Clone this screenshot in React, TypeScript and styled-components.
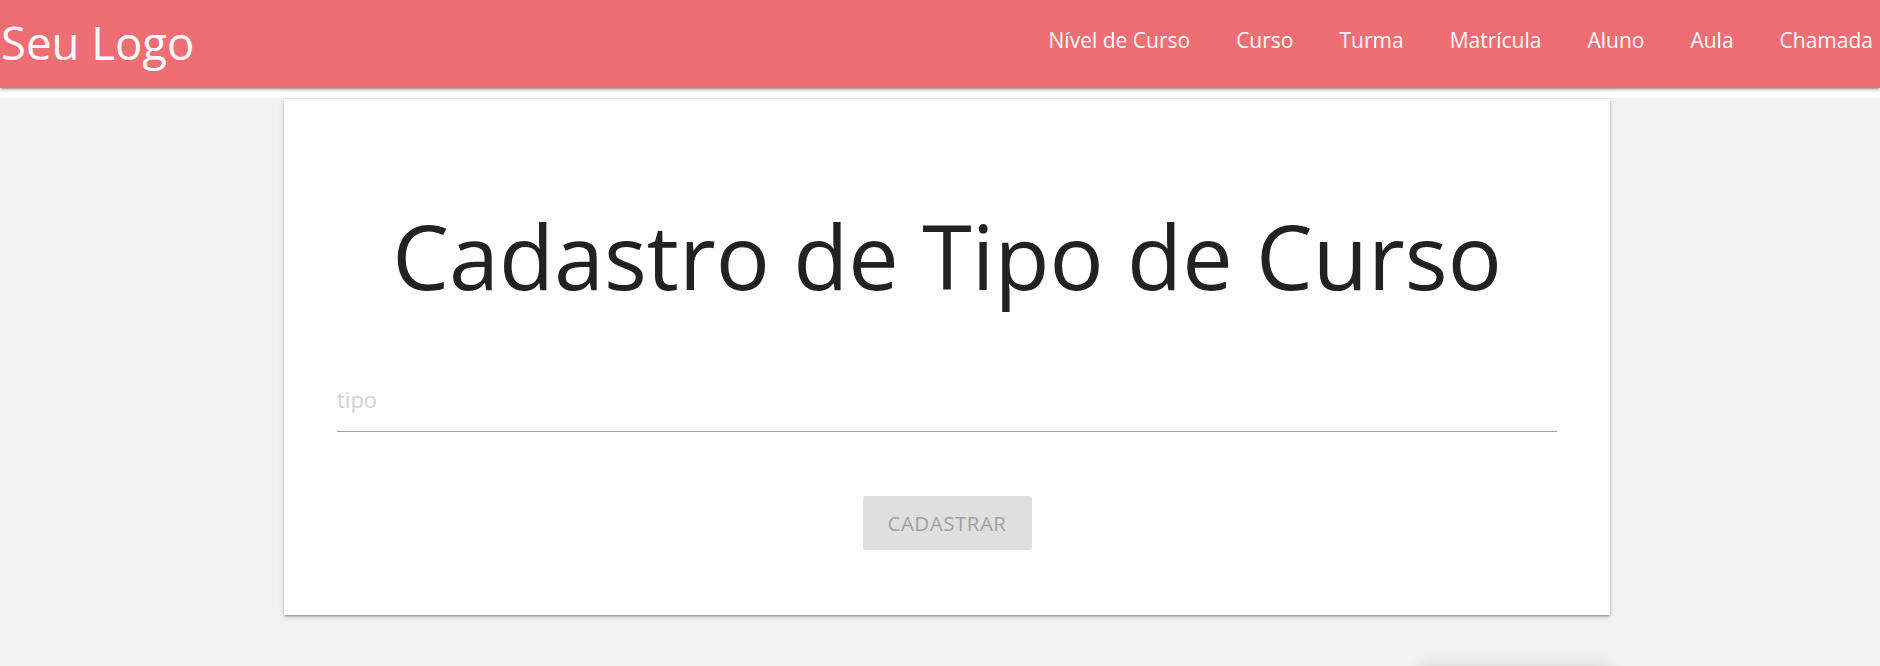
import React from "react";
import styled, { createGlobalStyle } from "styled-components";

const Global = createGlobalStyle`
  html, body { margin: 0; padding: 0; background: #ffffff; }
  body { font-family: "Open Sans", "Noto Sans", sans-serif; }
  * { box-sizing: border-box; }
`;

const Header = styled.header`
  background: #ffffff;
  padding-bottom: 10px;
`;

const NavBar = styled.nav`
  height: 88px;
  background: #ef6e74;
  display: flex;
  align-items: center;
  justify-content: space-between;
  box-shadow: 0 2px 2px 0 rgba(0,0,0,.14), 0 3px 1px -2px rgba(0,0,0,.12), 0 1px 5px 0 rgba(0,0,0,.2);
`;

const Brand = styled.a`
  color: #ffffff;
  font-size: 45.5px;
  line-height: 1;
  padding-left: 1px;
  margin-top: -3px;
  text-decoration: none;
`;

const Links = styled.ul`
  list-style: none;
  display: flex;
  gap: 46px;
  margin: 0;
  padding: 0 7px 0 0;
`;

const LinkItem = styled.li`
  color: #ffffff;
  font-size: 21px;
  line-height: 1;
  margin-top: -7px;
`;

const Main = styled.main`
  background: #f2f2f2;
  min-height: 600px;
  padding-top: 1px;
  padding-bottom: 60px;
`;

const Card = styled.section`
  margin-left: 284px;
  width: 1326px;
  height: 516px;
  background: #ffffff;
  box-shadow: 0 2px 2px 0 rgba(0,0,0,.14), 0 3px 1px -2px rgba(0,0,0,.12), 0 1px 5px 0 rgba(0,0,0,.2);
  padding: 0 53px;
  display: flex;
  flex-direction: column;
  align-items: stretch;
`;

const Title = styled.h1`
  margin: 111px 0 0;
  font-weight: 400;
  font-size: 90px;
  line-height: 1;
  color: #222222;
  text-align: center;
`;

const Field = styled.div`
  margin-top: 76px;
  border-bottom: 1px solid #9e9e9e;
  height: 56px;
  padding-top: 8px;
  display: flex;
  align-items: flex-start;
`;

const Input = styled.input`
  border: none;
  outline: none;
  background: transparent;
  width: 100%;
  height: 30px;
  font-family: inherit;
  font-size: 22px;
  color: #222;
  padding: 0;
  &::placeholder { color: #d2d2d2; }
`;

const ButtonRow = styled.div`
  display: flex;
  justify-content: center;
  margin-top: 64px;
`;

const Button = styled.button`
  width: 169px;
  height: 54px;
  border: none;
  border-radius: 2px;
  background: #dfdfdf;
  color: #9f9f9f;
  font-family: inherit;
  font-size: 20.5px;
  letter-spacing: 0.5px;
  padding: 0;
`;

const Footer = styled.div`
  display: flex;
  justify-content: flex-end;
  margin-top: 52px;
  padding-right: 272px;
`;

const Fab = styled.div`
  width: 188px;
  height: 60px;
  background: #f2f2f2;
  border-radius: 4px;
  box-shadow: 0 0 14px 2px rgba(0,0,0,.12);
`;

const navItems = ["Nível de Curso", "Curso", "Turma", "Matrícula", "Aluno", "Aula", "Chamada"];

export default function App() {
  return (
    <>
      <Global />
      <Header>
        <NavBar>
          <Brand>Seu Logo</Brand>
          <Links>
            {navItems.map((n) => (
              <LinkItem key={n}>{n}</LinkItem>
            ))}
          </Links>
        </NavBar>
      </Header>
      <Main>
        <Card>
          <Title>Cadastro de Tipo de Curso</Title>
          <Field>
            <Input placeholder="tipo" />
          </Field>
          <ButtonRow>
            <Button>CADASTRAR</Button>
          </ButtonRow>
        </Card>
        <Footer>
          <Fab />
        </Footer>
      </Main>
    </>
  );
}
